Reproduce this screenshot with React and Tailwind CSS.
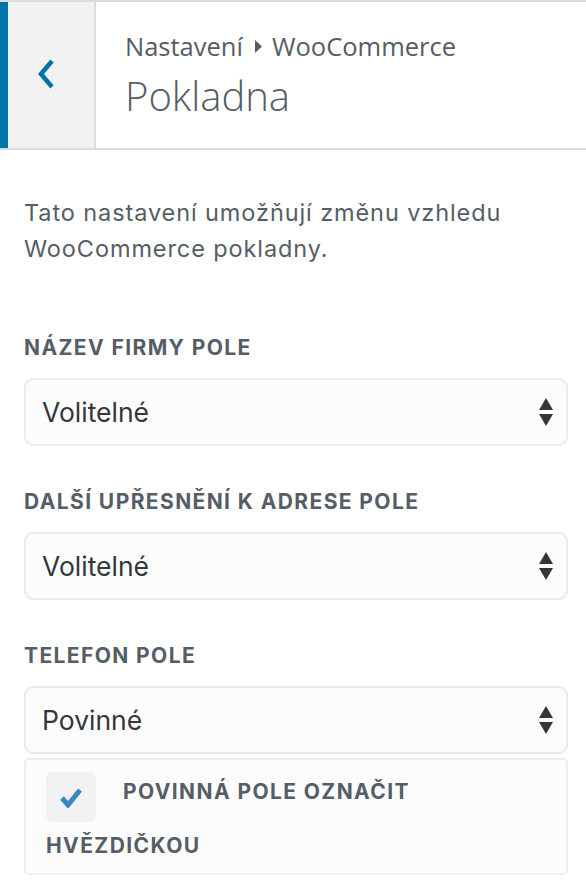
import { useState } from "react";

const fields = [
  { label: "Název firmy pole", value: "Volitelné" },
  { label: "Další upřesnění k adrese pole", value: "Volitelné" },
  { label: "Telefon pole", value: "Povinné" },
];

function SelectArrows() {
  return (
    <svg width="16" height="30" viewBox="0 0 16 30" className="shrink-0">
      <path d="M8 1 L15 13 L1 13 Z" fill="#32373c" />
      <path d="M1 17 L15 17 L8 29 Z" fill="#32373c" />
    </svg>
  );
}

function FakeSelect({ value }) {
  return (
    <div className="flex h-[68px] items-center justify-between rounded-[9px] border-2 border-[#ebebeb] bg-[#fcfcfc] pl-[16px] pr-[12px]">
      <span className="text-[26.5px] leading-[32px] text-[#32373c]">{value}</span>
      <SelectArrows />
    </div>
  );
}

export default function App() {
  const [checked, setChecked] = useState(true);

  return (
    <div className="h-[882px] w-[586px] bg-white font-['Inter',sans-serif]">
      {/* section header */}
      <div className="flex h-[150px] border-y-2 border-[#dddddd]">
        <div className="flex w-[96px] items-center justify-center border-l-[8px] border-r-2 border-l-[#0073aa] border-r-[#dddddd] bg-[#f2f2f2]">
          <svg width="20" height="32" viewBox="0 0 20 32" className="mr-[10px] mb-[2px]">
            <polyline points="16,3 5,16 16,29" fill="none" stroke="#0073aa" strokeWidth="4.5" />
          </svg>
        </div>
        <div className="flex flex-col pl-[29px] pt-[27px] font-['Open_Sans',sans-serif] text-[#555d66]">
          <div className="flex items-center text-[25.5px] leading-[34px]">
            <span>Nastavení</span>
            <svg width="9" height="13" viewBox="0 0 9 13" className="ml-[11px] mr-[9px]">
              <path d="M1 0 L8 6.5 L1 13 Z" fill="#555d66" />
            </svg>
            <span>WooCommerce</span>
          </div>
          <h3 className="mt-[9px] text-[40px] font-light leading-[48px]">Pokladna</h3>
        </div>
      </div>

      <div className="pl-[24px] pr-[18px] pt-[45px]">
        <p className="text-[23.5px] leading-[36px] tracking-[0.9px] text-[#555d66]">
          Tato nastavení umožňují změnu vzhledu WooCommerce pokladny.
        </p>

        <div className="mt-[67px]">
          {fields.map((f, i) => (
            <div key={i} className={i > 0 ? "mt-[42px]" : ""}>
              <div className="mb-[16px] text-[21px] font-bold uppercase leading-[28px] tracking-[1.4px] text-[#555d66]">
                {f.label}
              </div>
              <FakeSelect value={f.value} />
            </div>
          ))}
        </div>

        <div
          className="mt-[4px] h-[117px] rounded-[5px] border-2 border-[#eeeeee] bg-[#fcfcfc] px-[20px] pt-[8px]"
          onClick={() => setChecked(!checked)}
        >
          <p className="text-[21px] font-bold uppercase leading-[48px] tracking-[1.4px] text-[#555d66]">
            <span className="mr-[27px] mt-[4px] inline-flex h-[50px] w-[50px] items-center justify-center rounded-[7px] bg-[#f2f2f2] align-top">
              {checked && (
                <svg width="24" height="21" viewBox="0 0 24 21">
                  <polyline points="3,11 9,18 21,3" fill="none" stroke="#3a88bf" strokeWidth="5" />
                </svg>
              )}
            </span>
            Povinná pole označit hvězdičkou
          </p>
        </div>
      </div>
    </div>
  );
}
